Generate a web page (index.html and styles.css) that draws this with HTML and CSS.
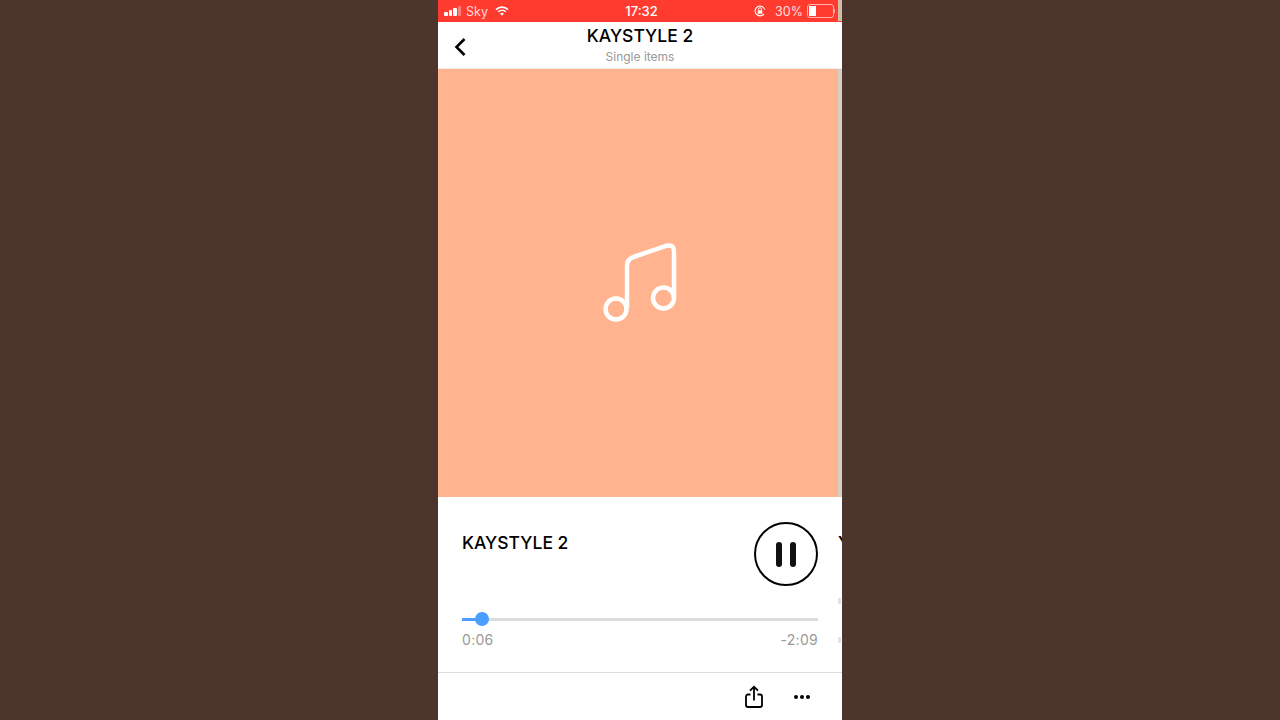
FILE: index.html
```html
<!DOCTYPE html>
<html lang="en">
<head>
  <meta charset="UTF-8" />
  <title>KAYSTYLE 2</title>
  <link rel="stylesheet" href="styles.css">
</head>
<body>
  <div class="phone">
    <!-- Status bar -->
    <div class="status-bar">
      <div class="status-left">
        <span class="signal">
          <i class="on s1"></i><i class="on s2"></i><i class="on s3"></i><i class="s4"></i>
        </span>
        <span class="carrier">Sky</span>
        <svg class="wifi" width="14" height="10" viewBox="0 0 14 10">
          <path d="M1 3.600a8.600 8.600 0 0 1 12 0M3.200 5.800a5.400 5.400 0 0 1 7.600 0" fill="none" stroke="#fff" stroke-width="1.600"/>
          <path d="M5 7.600a2.900 2.900 0 0 1 4 0L7 9.800z" fill="#fff"/>
        </svg>
      </div>
      <div class="status-time">17:32</div>
      <div class="status-right">
        <svg class="rotation" width="12" height="12" viewBox="0 0 13 13">
          <path d="M10.800 9.600A5.300 5.300 0 1 1 11.600 5" fill="none" stroke="#fff" stroke-width="1.200"/>
          <rect x="4" y="5.600" width="5" height="4" rx="0.600" fill="#fff"/>
          <path d="M4.900 5.600V4.500a1.600 1.600 0 0 1 3.200 0v1.100" fill="none" stroke="#fff"/>
        </svg>
        <span class="percent">30%</span>
        <div class="battery"><div class="battery-fill"></div></div>
        <div class="battery-tip"></div>
      </div>
      <div class="status-peek"></div>
    </div>

    <!-- Title bar -->
    <div class="title-bar">
      <svg class="back" width="14" height="20" viewBox="0 0 14 20">
        <path d="M11.500 2 3.500 10l8 8" fill="none" stroke="#000" stroke-width="2.600"/>
      </svg>
      <h1 class="title">KAYSTYLE 2</h1>
      <p class="subtitle">Single items</p>
    </div>

    <!-- Player pages, next one peeks in from the right -->
    <div class="pager">
      <div class="page">
        <div class="art">
          <svg width="100" height="100" viewBox="0 0 100 100">
            <g fill="none" stroke="#fff" stroke-width="4.500">
              <circle cx="26" cy="79" r="10.500"/>
              <circle cx="73.500" cy="68" r="10.500"/>
              <path d="M37 78V36q0-7 6.500-9L76 15.800q8-2 8 6V68"/>
            </g>
          </svg>
        </div>
        <div class="info">
          <div class="track-row">
            <h2 class="track-name">KAYSTYLE 2</h2>
            <button class="pause-btn"><i></i><i></i></button>
          </div>
          <div class="slider">
            <div class="slider-done"></div>
            <div class="slider-thumb"></div>
          </div>
          <div class="times">
            <span>0:06</span>
            <span>-2:09</span>
          </div>
        </div>
      </div>
      <div class="page-peek">
        <div class="art-peek"></div>
        <div class="peek-info">
          <span class="peek-name">Y</span>
          <div class="peek-tick first"></div>
          <div class="peek-tick"></div>
        </div>
      </div>
    </div>

    <!-- Bottom actions -->
    <div class="actions">
      <svg class="share" width="20" height="24" viewBox="0 0 20 24">
        <path d="M6.500 9.500H4a2 2 0 0 0-2 2V20a2 2 0 0 0 2 2h12a2 2 0 0 0 2-2v-8.500a2 2 0 0 0-2-2h-2.500" fill="none" stroke="#000" stroke-width="1.800"/>
        <path d="M10 15.500V2M6 5.700 10 1.800l4 3.900" fill="none" stroke="#000" stroke-width="1.800"/>
      </svg>
      <div class="dots"><i></i><i></i><i></i></div>
    </div>
  </div>
</body>
</html>
```

FILE: styles.css
```css
body {
  margin: 0;
  height: 720px;
  overflow: hidden;
  background-color: #4c362c;
  font-family: Inter, 'Noto Sans', sans-serif;
  display: flex;
  justify-content: center;
}

.phone {
  width: 404px;
  height: 720px;
  background-color: white;
  display: flex;
  flex-direction: column;
  overflow: hidden;
}

/* Status bar */
.status-bar {
  height: 22px;
  flex: none;
  position: relative;
  background-color: #ff3b30;
  color: white;
  font-size: 13px;
  display: grid;
  grid-template-columns: 1fr auto 1fr;
  align-items: center;
}

.status-peek {
  position: absolute;
  right: 0;
  top: 0;
  width: 4px;
  height: 21px;
  background: repeating-linear-gradient(#d8b8b0 0, #d8b8b0 2px, #c8c49c 2px, #c8c49c 4px);
}

.status-left {
  display: flex;
  align-items: center;
  padding-left: 6px;
}

.signal {
  display: flex;
  align-items: flex-end;
  gap: 1px;
  height: 10px;
}

.signal i {
  width: 3.500px;
  border-radius: 1px;
  background: rgba(255, 255, 255, 0.35);
}

.signal .on {
  background: white;
}

.s1 { height: 4px; }
.s2 { height: 6px; }
.s3 { height: 8px; }
.s4 { height: 10px; }

.carrier {
  margin-left: 5px;
  color: rgba(255, 255, 255, 0.8);
  font-size: 12.500px;
}

.wifi {
  margin-left: 7px;
}

.status-time {
  font-weight: 500;
  padding-left: 3px;
}

.status-right {
  display: flex;
  align-items: center;
  justify-content: flex-end;
  padding-right: 7px;
}

.percent {
  margin-left: 9px;
  font-size: 12.500px;
  color: rgba(255, 255, 255, 0.85);
}

.battery {
  margin-left: 4px;
  width: 23px;
  height: 10px;
  border: 1px solid rgba(255, 255, 255, 0.6);
  border-radius: 3px;
  padding: 1px;
}

.battery-fill {
  width: 7px;
  height: 100%;
  background: white;
}

.battery-tip {
  width: 1px;
  height: 4px;
  background: rgba(255, 255, 255, 0.6);
}

/* Title bar */
.title-bar {
  height: 47px;
  flex: none;
  position: relative;
  box-sizing: border-box;
  border-bottom: 1px solid #f0ece8;
  text-align: center;
}

.back {
  position: absolute;
  left: 15px;
  top: 15px;
}

.title {
  margin: 4px 0 0;
  font-size: 17.500px;
  line-height: 20px;
  font-weight: 500;
  color: #000;
}

.subtitle {
  margin: 4px 0 0;
  font-size: 12px;
  line-height: 14px;
  color: #999;
}

/* Pager */
.pager {
  flex: 1;
  display: flex;
  min-height: 0;
}

.page {
  width: 400px;
  flex: none;
}

.art {
  height: 428px;
  background-color: #ffb38e;
  display: flex;
  align-items: center;
  justify-content: center;
  padding: 0 0 6px 4px;
  box-sizing: border-box;
}

.info {
  padding: 25px 20px 0 24px;
}

.track-row {
  display: flex;
  justify-content: space-between;
}

.track-name {
  margin: 11px 0 0;
  font-size: 17.500px;
  line-height: 20px;
  font-weight: 500;
  color: #000;
}

.pause-btn {
  width: 64px;
  height: 64px;
  box-sizing: border-box;
  border: 2px solid #000;
  border-radius: 50%;
  background: white;
  padding: 0;
  display: flex;
  align-items: center;
  justify-content: center;
  gap: 8px;
}

.pause-btn i {
  width: 6px;
  height: 25px;
  border-radius: 3px;
  background-color: #111;
}

.slider {
  position: relative;
  height: 3px;
  margin-top: 32px;
  background-color: #dcdcdc;
}

.slider-done {
  width: 20px;
  height: 100%;
  background-color: #4a9eff;
}

.slider-thumb {
  position: absolute;
  left: 12.500px;
  top: -6px;
  width: 14px;
  height: 14px;
  border-radius: 50%;
  background-color: #4a9eff;
}

.times {
  display: flex;
  justify-content: space-between;
  margin-top: 10px;
  font-size: 14px;
  line-height: 17px;
  letter-spacing: 0.3px;
  color: #999;
}

/* Sliver of the next page */
.page-peek {
  width: 4px;
  flex: none;
  overflow: hidden;
}

.art-peek {
  height: 428px;
  background: repeating-linear-gradient(#d8ccd8 0, #d8ccd8 2px, #d6d2ba 2px, #d6d2ba 4px);
}

.peek-info {
  padding-top: 36px;
}

.peek-name {
  display: block;
  font-size: 17.500px;
  line-height: 20px;
  font-weight: 500;
  color: #000;
}

.peek-tick {
  width: 3px;
  height: 6px;
  margin-top: 33px;
  background-color: #e2e2ea;
}

.peek-tick.first {
  margin-top: 45px;
}

/* Bottom actions */
.actions {
  height: 48px;
  flex: none;
  box-sizing: border-box;
  border-top: 1px solid #ddd;
  display: flex;
  align-items: center;
  justify-content: flex-end;
  padding-right: 32px;
}

.share {
  margin-right: 30px;
}

.dots {
  display: flex;
  gap: 2px;
}

.dots i {
  width: 4px;
  height: 4px;
  border-radius: 50%;
  background-color: #000;
}
```
